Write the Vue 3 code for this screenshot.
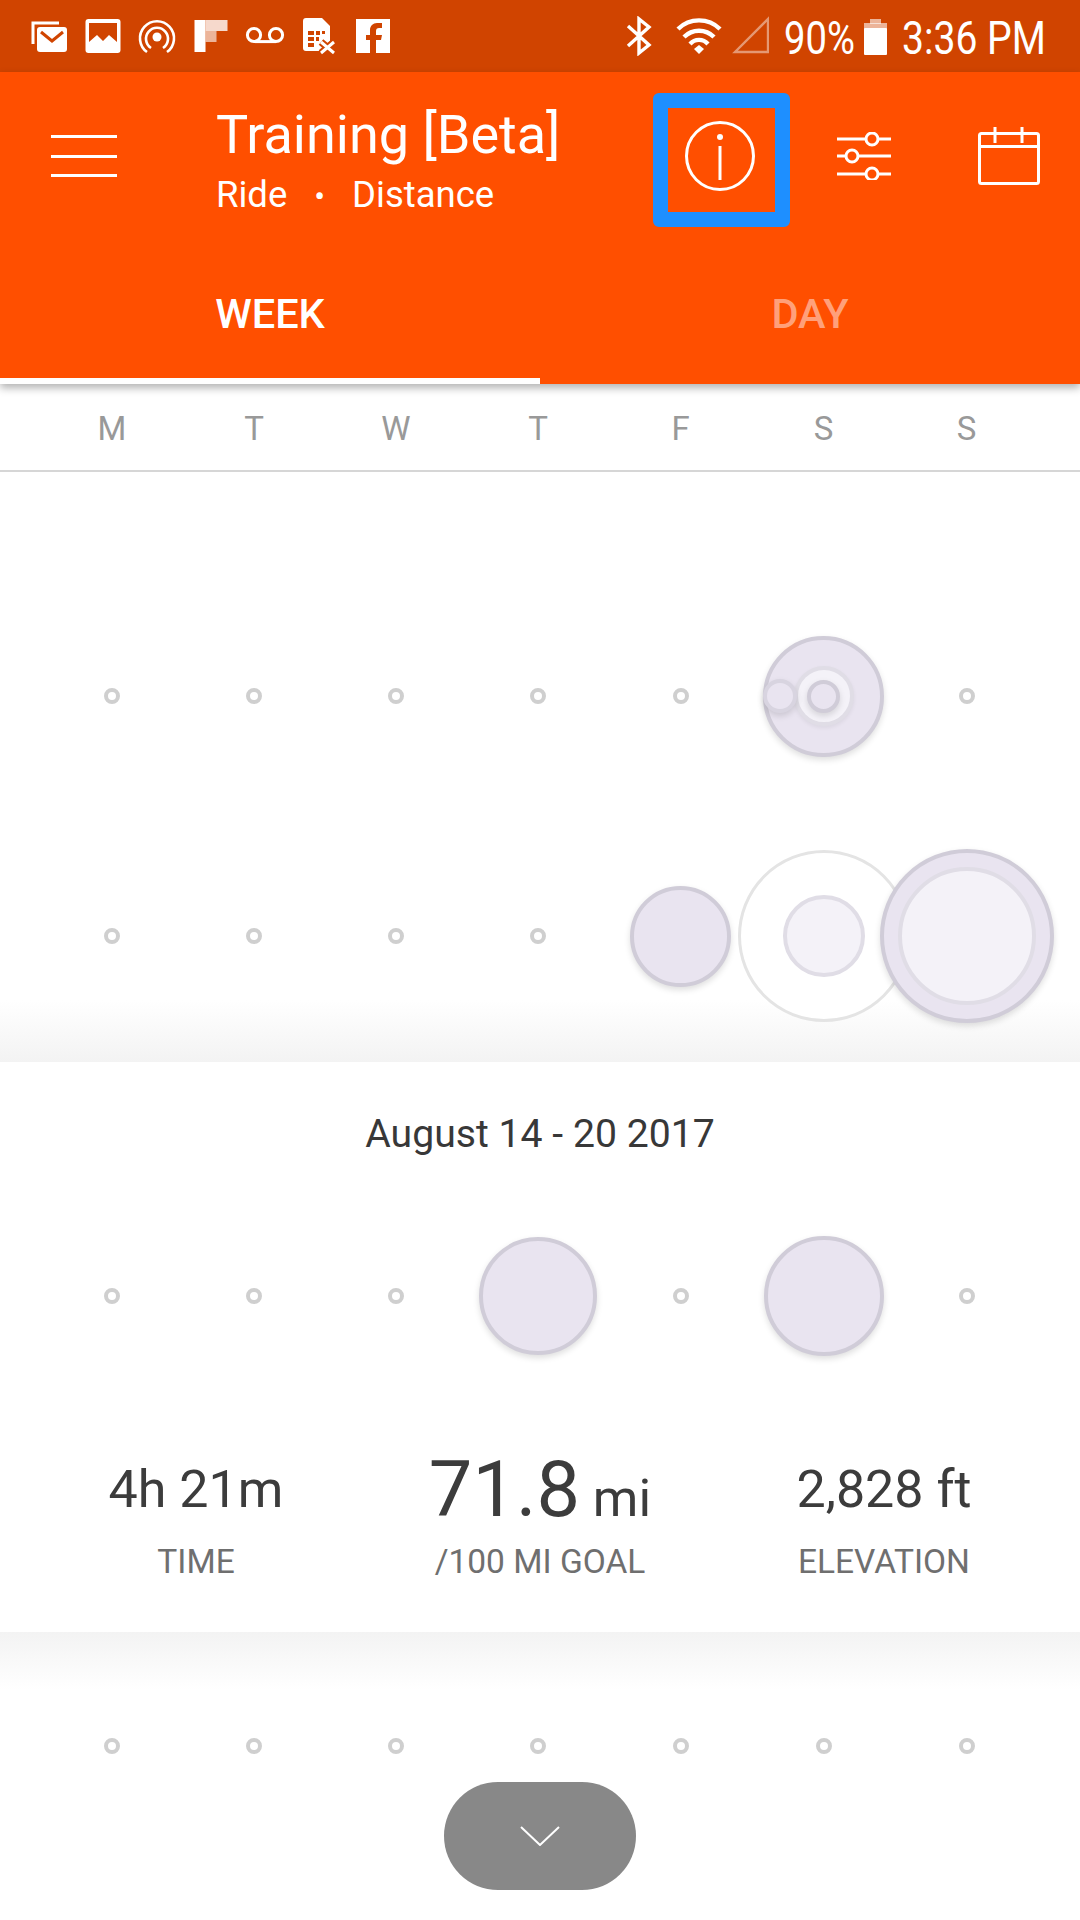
<template>
  <div class="screen">
    <div class="status-bar">
      <div class="status-left">
        <svg class="ic-notify" width="362" height="40" viewBox="31 17 362 40">
          <!-- stacked mail -->
          <path d="M33 45V24h26" fill="none" stroke="#fff" stroke-width="3" />
          <rect x="37" y="28" width="30" height="25" rx="3" fill="#fff" />
          <path d="M41 33l11 9 11-9" fill="none" stroke="#d04400" stroke-width="3" />
          <!-- gallery -->
          <rect x="85.5" y="20" width="35" height="34" rx="3" fill="#fff" />
          <path d="M89 24h28v19l-8-7-6 6-6-6-8 7z" fill="#d04400" />
          <!-- cast -->
          <circle cx="157" cy="38" r="4.5" fill="#fff" />
          <path d="M151 49a11 11 0 1 1 12 0" fill="none" stroke="#fff" stroke-width="2.6" />
          <path d="M147 53a17 17 0 1 1 20 0" fill="none" stroke="#fff" stroke-width="2.6" />
          <!-- flipboard -->
          <rect x="194.5" y="21" width="11" height="32" fill="#fff" />
          <rect x="205.5" y="21" width="22" height="11" fill="#fff" opacity="0.8" />
          <rect x="205.5" y="32" width="11" height="11" fill="#fff" opacity="0.6" />
          <!-- voicemail -->
          <circle cx="254" cy="36" r="6.6" fill="none" stroke="#fff" stroke-width="3" />
          <circle cx="276" cy="36" r="6.6" fill="none" stroke="#fff" stroke-width="3" />
          <path d="M254 42.6h22" stroke="#fff" stroke-width="3" />
          <!-- no sim -->
          <path d="M306 19h16l8 8v15l-8 9v1h-16a3 3 0 0 1-3-3V22a3 3 0 0 1 3-3z" fill="#fff" />
          <path d="M308 32h6v4h-6zM316 32h4v4h-4zM322 32h3v3h-3zM308 38h6v4h-6zM316 38h3v4h-3zM308 44h6v4h-6z" fill="#d04400" />
          <path d="M321 43l13 11M334 43l-13 11" stroke="#d04400" stroke-width="7" />
          <path d="M321 43l13 11M334 43l-13 11" stroke="#fff" stroke-width="3" />
          <!-- facebook -->
          <rect x="356" y="20" width="34" height="34" fill="#fff" />
          <path d="M376 54V41h5l1-5h-6v-4c0-2 1-3 3-3h3v-5h-5c-4 0-7 3-7 7v5h-4v5h4v13z" fill="#d04400" />
        </svg>
      </div>
      <div class="status-right">
        <svg class="ic-system" width="144" height="40" viewBox="624 17 144 40">
          <!-- bluetooth -->
          <path d="M627 27l21 19-10 8V20l10 8-21 19" fill="none" stroke="#fff" stroke-width="3.4" />
          <!-- wifi -->
          <path d="M677 30a30 30 0 0 1 42 0" fill="none" stroke="#fff" stroke-width="4.4" />
          <path d="M683 38a21 21 0 0 1 30 0" fill="none" stroke="#fff" stroke-width="4.4" />
          <path d="M689 45a12 12 0 0 1 18 0" fill="none" stroke="#fff" stroke-width="4.2" />
          <path d="M693 50l5-4 5 4-5 5z" fill="#fff" />
          <!-- signal -->
          <path d="M734 53l33-33v33z" fill="none" stroke="#fff" stroke-opacity="0.45" stroke-width="2.4" />
        </svg>
        <span class="status-text pct">90%</span>
        <svg class="ic-battery" width="23" height="36" viewBox="0 0 23 36">
          <rect x="6" y="0" width="11" height="5" fill="#fff" opacity="0.6" />
          <rect x="0" y="4" width="23" height="6" fill="#fff" opacity="0.6" />
          <rect x="0" y="9" width="23" height="27" rx="1" fill="#fff" />
        </svg>
        <span class="status-text clock">3:36 PM</span>
      </div>
    </div>

    <header class="app-header">
      <div class="toolbar">
        <div class="hamburger"><i></i><i></i><i></i></div>
        <div class="titles">
          <div class="title">Training [Beta]</div>
          <div class="subtitle">Ride<span class="sep">•</span>Distance</div>
        </div>
        <div class="info-btn">
          <svg width="70" height="70" viewBox="0 0 70 70">
            <circle cx="35" cy="35" r="33.5" fill="none" stroke="#fff" stroke-width="3" />
            <circle cx="35" cy="16" r="3" fill="#fff" />
            <path d="M35 25v34" stroke="#fff" stroke-width="3" />
          </svg>
          <span class="highlight"></span>
        </div>
        <svg class="sliders" width="54" height="48" viewBox="0 0 54 48">
          <path d="M0 7h28M42 7h12M0 24h8M22 24h32M0 42h28M42 42h12" stroke="#fff" stroke-width="3" />
          <circle cx="35" cy="7" r="6" fill="none" stroke="#fff" stroke-width="3" />
          <circle cx="15" cy="24" r="6" fill="none" stroke="#fff" stroke-width="3" />
          <circle cx="35" cy="42" r="6" fill="none" stroke="#fff" stroke-width="3" />
        </svg>
        <svg class="calendar" width="62" height="58" viewBox="0 0 62 58">
          <rect x="1.5" y="6.5" width="59" height="50" rx="2" fill="none" stroke="#fff" stroke-width="3" />
          <path d="M1.5 19.5h59" stroke="#fff" stroke-width="3" />
          <path d="M17 0v16M44 0v16" stroke="#fff" stroke-width="3" />
        </svg>
      </div>
      <nav class="tabs">
        <div class="tab active">WEEK</div>
        <div class="tab">DAY</div>
      </nav>
    </header>

    <div class="weekdays">
      <span v-for="(d, i) in days" :key="i">{{ d }}</span>
    </div>

    <section class="week past">
      <div v-for="(row, r) in pastRows" :key="r" class="week-row">
        <div v-for="(cell, c) in row" :key="c" class="cell">
          <span v-if="!cell.length" class="dot"></span>
          <span
            v-for="(b, n) in cell"
            :key="n"
            class="bubble"
            :class="b.tone"
            :style="bubbleStyle(b)"
          ></span>
        </div>
      </div>
    </section>

    <section class="week current">
      <div class="range">August 14 - 20 2017</div>
      <div class="week-row">
        <div v-for="(cell, c) in currentRow" :key="c" class="cell">
          <span v-if="!cell.length" class="dot"></span>
          <span
            v-for="(b, n) in cell"
            :key="n"
            class="bubble"
            :class="b.tone"
            :style="bubbleStyle(b)"
          ></span>
        </div>
      </div>
      <div class="stats">
        <div class="stat">
          <div class="value">4h 21m</div>
          <div class="label">TIME</div>
        </div>
        <div class="stat">
          <div class="value"><span class="big">71.8</span> mi</div>
          <div class="label">/100 MI GOAL</div>
        </div>
        <div class="stat">
          <div class="value">2,828 ft</div>
          <div class="label">ELEVATION</div>
        </div>
      </div>
    </section>

    <section class="week next">
      <div class="week-row">
        <div v-for="n in 7" :key="n" class="cell"><span class="dot"></span></div>
      </div>
    </section>

    <button class="collapse">
      <svg width="40" height="20" viewBox="0 0 40 20">
        <path d="M1 1l19 18L39 1" fill="none" stroke="#fff" stroke-width="2" />
      </svg>
    </button>
  </div>
</template>

<script setup>
const days = ['M', 'T', 'W', 'T', 'F', 'S', 'S']

const pastRows = [
  [
    [], [], [], [], [],
    [
      { size: 121, tone: 'solid' },
      { size: 60, tone: 'pale lifted' },
      { size: 33, tone: 'solid' },
      { size: 34, tone: 'solid soft', x: -44 }
    ],
    []
  ],
  [
    [], [], [], [],
    [{ size: 101, tone: 'solid' }],
    [
      { size: 172, tone: 'ring' },
      { size: 82, tone: 'pale' }
    ],
    [
      { size: 174, tone: 'solid' },
      { size: 138, tone: 'pale' }
    ]
  ]
]

const currentRow = [
  [], [], [],
  [{ size: 118, tone: 'solid' }],
  [],
  [{ size: 120, tone: 'solid' }],
  []
]

function bubbleStyle(b) {
  return {
    width: `${b.size}px`,
    height: `${b.size}px`,
    marginLeft: `${-b.size / 2 + (b.x || 0)}px`,
    marginTop: `${-b.size / 2}px`
  }
}
</script>

<style>
html, body {
  margin: 0;
  background: #fff;
}
</style>

<style scoped>
.screen {
  position: relative;
  width: 1080px;
  height: 1920px;
  overflow: hidden;
  background: #fff;
  font-family: Roboto, "Liberation Sans", sans-serif;
}

.status-bar {
  display: flex;
  align-items: center;
  justify-content: space-between;
  height: 72px;
  padding: 0 36px 0 31px;
  box-sizing: border-box;
  background: #d04400;
  color: #fff;
}
.status-left svg,
.status-right svg {
  display: block;
}
.status-right {
  display: flex;
  align-items: center;
}
.status-text {
  display: inline-block;
  margin-top: 4px;
  font-size: 46px;
  line-height: 68px;
  transform-origin: left center;
  white-space: nowrap;
}
.pct {
  width: 80px;
  margin-left: 15px;
  transform: scaleX(0.83);
}
.clock {
  width: 142px;
  margin-left: 15px;
  transform: scaleX(0.85);
}
.ic-battery {
  margin-top: 1px;
}

.app-header {
  position: relative;
  z-index: 2;
  background: #ff4f00;
  box-shadow: 0 4px 8px rgba(0, 0, 0, 0.3);
  color: #fff;
}
.toolbar {
  display: flex;
  align-items: center;
  height: 168px;
  padding: 0 40px 0 51px;
}
.hamburger {
  display: flex;
  flex-direction: column;
  gap: 16.5px;
  width: 66px;
}
.hamburger i {
  display: block;
  height: 3px;
  background: #fff;
}
.titles {
  flex: 1;
  margin-top: 8px;
  margin-left: 99px;
}
.title {
  font-size: 54px;
  line-height: 64px;
}
.subtitle {
  margin-top: 7px;
  font-size: 36.5px;
  line-height: 42px;
}
.sep {
  margin: 0 27px;
  font-size: 32px;
}
.info-btn {
  position: relative;
  width: 70px;
  height: 70px;
}
.info-btn svg {
  display: block;
}
.highlight {
  position: absolute;
  left: -32px;
  top: -28px;
  width: 137px;
  height: 134px;
  box-sizing: border-box;
  border: 15px solid #1e8fff;
  border-radius: 6px;
}
.sliders {
  margin-left: 82px;
}
.calendar {
  margin-left: 87px;
}
.tabs {
  display: grid;
  grid-template-columns: 1fr 1fr;
  height: 144px;
}
.tab {
  box-sizing: border-box;
  padding-top: 50px;
  text-align: center;
  font-size: 41.5px;
  line-height: 48px;
  font-weight: 500;
  color: #ffa07a;
}
.tab.active {
  color: #fff;
  border-bottom: 6px solid #fff;
}

.weekdays {
  display: grid;
  grid-template-columns: repeat(4, 142px) repeat(3, 143px);
  padding: 2px 41px 0;
  height: 84px;
  align-items: center;
  border-bottom: 2px solid #d6d6d6;
  text-align: center;
  font-size: 33px;
  color: #999;
}

.week {
  position: relative;
}
.past {
  height: 590px;
  box-sizing: border-box;
  padding-top: 104px;
  background: linear-gradient(#fff 528px, #f3f3f3 100%);
}
.current {
  height: 570px;
}
.next {
  height: 288px;
  box-sizing: border-box;
  padding-top: 34px;
  background: linear-gradient(#f3f3f3, #fff 58px);
}
.week-row {
  display: grid;
  grid-template-columns: repeat(4, 142px) repeat(3, 143px);
  padding: 0 41px;
  height: 240px;
}
.current .week-row {
  height: 180px;
}
.next .week-row {
  height: 160px;
}
.cell {
  position: relative;
  display: flex;
  align-items: center;
  justify-content: center;
}
.dot {
  width: 16px;
  height: 16px;
  box-sizing: border-box;
  border: 4px solid #cfcfcf;
  border-radius: 50%;
}
.bubble {
  position: absolute;
  left: 50%;
  top: 50%;
  box-sizing: border-box;
  border-radius: 50%;
}
.solid {
  background: #e9e4f0;
  border: 4px solid #d0ccd8;
  box-shadow: 0 3px 6px rgba(0, 0, 0, 0.13);
}
.soft {
  border-color: #d8d4e0;
}
.pale {
  background: #f4f2f8;
  border: 4px solid #e0dde6;
}
.lifted {
  box-shadow: 0 2px 4px rgba(0, 0, 0, 0.06);
}
.ring {
  background: #fff;
  border: 3px solid #e4e4e4;
}

.range {
  height: 144px;
  line-height: 144px;
  text-align: center;
  font-size: 39.2px;
  color: #383838;
}
.stats {
  display: grid;
  grid-template-columns: repeat(3, 344px);
  padding: 0 24px;
  margin-top: 59px;
  text-align: center;
}
.value {
  height: 90px;
  line-height: 90px;
  font-size: 52px;
  color: #3c3c3c;
  white-space: nowrap;
}
.big {
  font-size: 77.5px;
}
.label {
  margin-top: 7px;
  font-size: 33.5px;
  line-height: 40px;
  color: #6f6f6f;
}

.collapse {
  position: absolute;
  left: 444px;
  top: 1782px;
  display: flex;
  align-items: center;
  justify-content: center;
  width: 192px;
  height: 108px;
  padding: 0;
  border: 0;
  border-radius: 54px;
  background: #888;
}
</style>
